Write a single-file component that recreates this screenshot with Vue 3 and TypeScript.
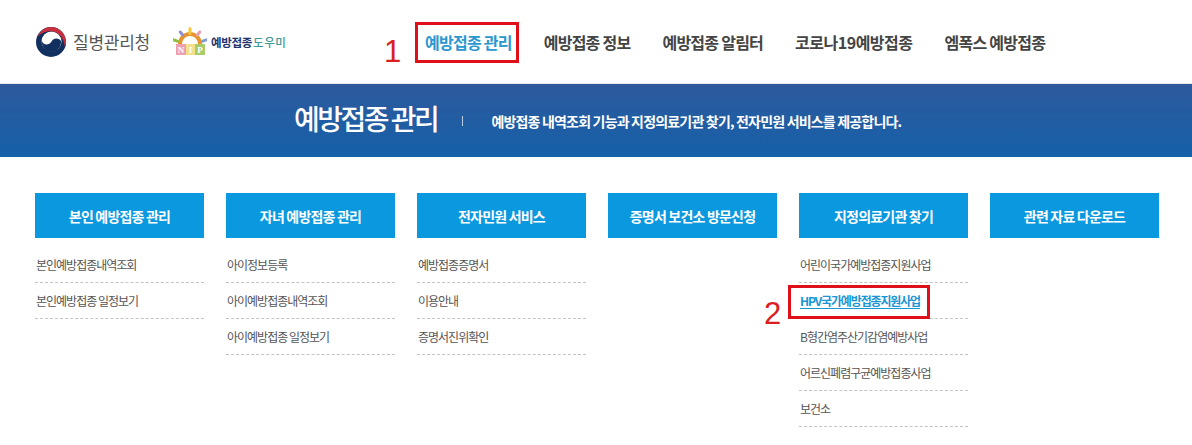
<script setup lang="ts">
interface Col { title: string; items: string[]; }
const nav: string[] = ['예방접종 관리', '예방접종 정보', '예방접종 알림터', '코로나19예방접종', '엠폭스 예방접종'];
const cols: Col[] = [
  { title: '본인 예방접종 관리', items: ['본인예방접종내역조회', '본인예방접종 일정보기'] },
  { title: '자녀 예방접종 관리', items: ['아이정보등록', '아이예방접종내역조회', '아이예방접종 일정보기'] },
  { title: '전자민원 서비스', items: ['예방접종증명서', '이용안내', '증명서진위확인'] },
  { title: '증명서 보건소 방문신청', items: [] },
  { title: '지정의료기관 찾기', items: ['어린이국가예방접종지원사업', 'HPV국가예방접종지원사업', 'B형간염주산기감염예방사업', '어르신폐렴구균예방접종사업', '보건소'] },
  { title: '관련 자료 다운로드', items: [] },
];
</script>

<template>
  <div class="page">
    <header class="top">
      <div class="logos">
        <svg class="emblem" width="32" height="32" viewBox="0 0 32 32">
          <circle cx="16" cy="16" r="15" fill="#12305f" />
          <circle cx="16.500" cy="15.500" r="10" fill="#fff" />
          <path d="M6.500 14C8 19.500 14 20 16.500 15.500C18.500 12 23 11.500 26 15C26.500 21 22 26 16 26C10.500 26 6.500 20.500 6.500 14Z" fill="#12305f" />
          <path d="M2.500 11C5 5 10 1 16 1C24.500 1 31 8 31 16C31 18 30.700 20 30 21.500C29.500 13 24 5.500 16 5.200C10 5 5.500 7.500 2.500 11Z" fill="#c8303f" />
        </svg>
        <span class="kdca">질병관리청</span>
        <svg class="sun" width="34" height="30" viewBox="0 0 34 30">
          <path d="M5 17A12 12 0 0 1 29 17L25 17A8 8 0 0 0 9 17Z" fill="#e8942c" />
          <rect x="15.500" y="0" width="3" height="8" rx="1.500" fill="#f5c83a" />
          <rect x="7" y="3" width="3" height="7" rx="1.500" fill="#8f8fd0" transform="rotate(-40 8.500 6.500)" />
          <rect x="24" y="3" width="3" height="7" rx="1.500" fill="#e8a0a8" transform="rotate(40 25.500 6.500)" />
          <rect x="1" y="10" width="3" height="7" rx="1.500" fill="#8cbf3f" transform="rotate(-70 2.500 13.500)" />
          <rect x="30" y="10" width="3" height="7" rx="1.500" fill="#7f9fd8" transform="rotate(70 31.500 13.500)" />
          <rect x="3" y="17" width="10" height="11" fill="#efa0b0" />
          <rect x="13" y="17" width="9" height="11" fill="#f3e08a" />
          <rect x="22" y="17" width="10" height="11" fill="#a9cc6a" />
          <text x="8" y="26" class="nip">N</text>
          <text x="17.500" y="26" class="nip">I</text>
          <text x="27" y="26" class="nip">P</text>
        </svg>
        <span class="helper"><b>예방접종</b><i>도우미</i></span>
      </div>
      <nav class="nav">
        <a v-for="(n, i) in nav" :key="n" :class="['nav-item', { on: i === 0 }]">{{ n }}</a>
      </nav>
    </header>

    <section class="banner">
      <h1>예방접종 관리</h1>
      <span class="sep"></span>
      <p>예방접종 내역조회 기능과 지정의료기관 찾기, 전자민원 서비스를 제공합니다.</p>
    </section>

    <main class="grid">
      <div v-for="c in cols" :key="c.title" class="col">
        <div class="col-head">{{ c.title }}</div>
        <ul>
          <li v-for="it in c.items" :key="it" :class="{ active: it.startsWith('HPV') }">{{ it }}</li>
        </ul>
      </div>
    </main>

    <span class="mark box1"></span>
    <span class="num n1">1</span>
    <span class="mark box2"></span>
    <span class="num n2">2</span>
  </div>
</template>

<style>
html, body { margin: 0; background: #fff; }
</style>

<style scoped>
.page {
  position: relative;
  width: 1192px;
  height: 445px;
  overflow: hidden;
  background: #fff;
  font-family: "Noto Sans CJK KR", "Noto Sans", sans-serif;
}
.top {
  height: 84px;
  display: flex;
  align-items: center;
  padding-left: 35px;
  border-bottom: 1px solid #e6e6f0;
  box-sizing: border-box;
}
.logos {
  width: 390px;
  display: flex;
  align-items: center;
}
.emblem { flex: none; }
.kdca {
  margin-left: 6px;
  font-size: 17px;
  color: #555;
  letter-spacing: -0.250px;
  line-height: 1;
}
.sun { margin-left: 23px; flex: none; }
.nip { font: bold 9px "Liberation Serif", serif; fill: #fff; text-anchor: middle; }
.helper {
  margin-left: 4px;
  margin-top: 2px;
  font-size: 11.500px;
  letter-spacing: -0.300px;
  display: flex;
  line-height: 1;
}
.helper b { color: #23356f; font-weight: 700; }
.helper i { color: #3d9a9a; font-style: normal; font-weight: 500; margin-left: 1px; letter-spacing: 0.500px; }
.nav {
  display: flex;
  gap: 32px;
}
.nav-item {
  font-size: 16px;
  font-weight: 700;
  color: #444;
  letter-spacing: -0.750px;
  line-height: 1;
  white-space: nowrap;
}
.nav-item:nth-child(4) { letter-spacing: -0.500px; }
.nav-item.on { color: #2a97cf; }
.banner {
  height: 73px;
  background: linear-gradient(180deg, #2e5a9c 0%, #1560a9 100%);
  display: flex;
  align-items: center;
  padding-left: 294px;
  color: #fff;
}
.banner h1 {
  margin: 0 0 5px;
  font-size: 28px;
  font-weight: 500;
  letter-spacing: -2.500px;
  line-height: 1;
  white-space: nowrap;
}
.sep {
  width: 1px;
  height: 10px;
  background: #b9cde4;
  margin-left: 25px;
  margin-right: 28px;
}
.banner p {
  margin: 0;
  font-size: 14px;
  font-weight: 700;
  letter-spacing: -0.820px;
  white-space: nowrap;
  line-height: 1;
}
.grid {
  display: flex;
  gap: 22px;
  padding: 36px 0 0 35px;
}
.col { width: 169px; flex: none; }
.col-head {
  height: 45px;
  background: #0a98df;
  color: #fff;
  font-size: 14px;
  font-weight: 700;
  letter-spacing: -0.800px;
  display: flex;
  align-items: center;
  justify-content: center;
  white-space: nowrap;
}
ul {
  list-style: none;
  margin: 9px 0 0;
  padding: 0;
}
li {
  height: 36px;
  box-sizing: border-box;
  border-bottom: 1px dashed #c4c4c4;
  font-size: 12px;
  color: #555;
  letter-spacing: -1px;
  line-height: 35px;
  padding-left: 1px;
  white-space: nowrap;
}
li.active {
  color: #1a96d4;
  font-weight: 700;
  letter-spacing: -1.150px;
  text-decoration: underline;
  text-underline-offset: 2px;
}
.mark {
  position: absolute;
  border: 3px solid #e0101a;
  box-sizing: border-box;
}
.box1 { left: 415px; top: 22px; width: 104px; height: 41px; }
.box2 { left: 788px; top: 285px; width: 142px; height: 34px; }
.num {
  position: absolute;
  font-family: "Liberation Sans", sans-serif;
  font-size: 31px;
  line-height: 1;
  color: #d92020;
}
.n1 { left: 384px; top: 36px; }
.n2 { left: 764px; top: 298px; }
</style>
